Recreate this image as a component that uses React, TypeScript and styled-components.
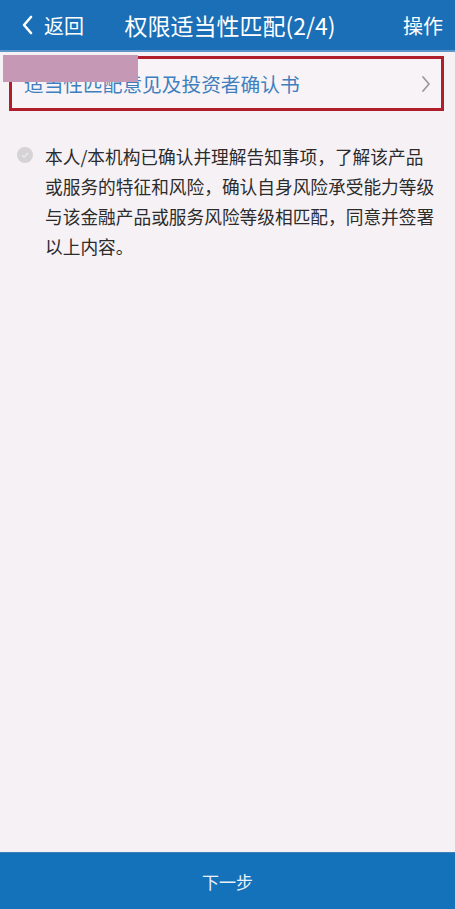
import React from "react";
import styled, { createGlobalStyle } from "styled-components";

const Global = createGlobalStyle`
  html, body { margin: 0; padding: 0; }
  body {
    font-family: "Noto Sans CJK SC", "Noto Sans", sans-serif;
    background: #f6f1f5;
  }
  #root { min-height: 100vh; }
`;

const Page = styled.div`
  position: relative;
  display: flex;
  flex-direction: column;
  min-height: 100vh;
  background: #f6f1f5;
`;

const Header = styled.header`
  height: 52px;
  background: #1a6fb7;
  display: grid;
  grid-template-columns: 100px 1fr 70px;
  align-items: center;
  color: #fff;
  border-bottom: 2px solid #5d95c9;
  box-sizing: border-box;
`;

const Back = styled.div`
  display: flex;
  align-items: center;
  padding-left: 21px;
  gap: 11px;
  font-size: 20px;
`;

const Title = styled.div`
  text-align: center;
  font-size: 23px;
  padding-right: 25px;
  white-space: nowrap;
`;

const Action = styled.div`
  font-size: 20px;
  text-align: right;
  padding-right: 12px;
`;

const Main = styled.main`
  flex: 1;
  padding: 4px 11px 0 9px;
`;

const ItemBox = styled.div`
  height: 55px;
  box-sizing: border-box;
  border: 3px solid #b01e2c;
  display: flex;
  align-items: center;
  justify-content: space-between;
  padding: 0 10px 0 12px;
  background: #f8f3f7;
`;

const ItemText = styled.span`
  color: #3f7fbe;
  font-size: 19.7px;
`;

const Agree = styled.div`
  display: flex;
  align-items: flex-start;
  gap: 12px;
  padding: 30px 0 0 8px;
`;

const Check = styled.span`
  flex: none;
  width: 16px;
  height: 16px;
  border-radius: 50%;
  background: #d5d3d5;
  margin-top: 6px;
  display: flex;
  align-items: center;
  justify-content: center;
`;

const AgreeText = styled.p`
  margin: 0;
  width: 392px;
  font-size: 17.7px;
  line-height: 30px;
  color: #2b2b2b;
`;

const Footer = styled.footer`
  height: 56px;
  background: #1472bb;
  border-top: 1px solid #3f7fb8;
  display: flex;
  align-items: center;
  justify-content: center;
  color: #e9f1f9;
  font-size: 17px;
`;

const Redact = styled.div`
  position: absolute;
  left: 3px;
  top: 55px;
  width: 135px;
  height: 27px;
  background: #c599b6;
`;

export default function App() {
  return (
    <>
      <Global />
      <Page>
        <Header>
          <Back>
            <svg width="12" height="20" viewBox="0 0 12 20">
              <path d="M10 2 L3 10 L10 18" fill="none" stroke="#fff" strokeWidth="2.6" strokeLinecap="round" strokeLinejoin="round" />
            </svg>
            <span>返回</span>
          </Back>
          <Title>权限适当性匹配(2/4)</Title>
          <Action>操作</Action>
        </Header>
        <Main>
          <ItemBox>
            <ItemText>适当性匹配意见及投资者确认书</ItemText>
            <svg width="10" height="18" viewBox="0 0 10 18">
              <path d="M2 2 L8 9 L2 16" fill="none" stroke="#9a9a9a" strokeWidth="1.8" strokeLinecap="round" strokeLinejoin="round" />
            </svg>
          </ItemBox>
          <Agree>
            <Check>
              <svg width="10" height="10" viewBox="0 0 10 10">
                <path d="M2 5.2 L4.2 7.2 L8 3" fill="none" stroke="#ececec" strokeWidth="1.3" />
              </svg>
            </Check>
            <AgreeText>
              本人/本机构已确认并理解告知事项，了解该产品或服务的特征和风险，确认自身风险承受能力等级与该金融产品或服务风险等级相匹配，同意并签署以上内容。
            </AgreeText>
          </Agree>
        </Main>
        <Footer>下一步</Footer>
        <Redact />
      </Page>
    </>
  );
}
